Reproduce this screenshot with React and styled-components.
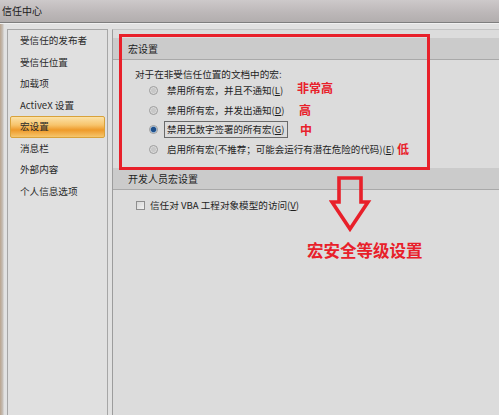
import React from 'react';
import styled, { createGlobalStyle } from 'styled-components';

const GlobalStyle = createGlobalStyle`
  html, body {
    margin: 0;
    padding: 0;
    overflow: hidden;
    background: #dcdcdc;
  }
  body {
    font-family: "Noto Sans CJK SC", "Liberation Sans", sans-serif;
    color: #1e1e1e;
  }
`;

const navItems = [
  '受信任的发布者',
  '受信任位置',
  '加载项',
  'ActiveX 设置',
  '宏设置',
  '消息栏',
  '外部内容',
  '个人信息选项',
];

const macroOptions = [
  { text: '禁用所有宏，并且不通知', key: 'L' },
  { text: '禁用所有宏，并发出通知', key: 'D' },
  { text: '禁用无数字签署的所有宏', key: 'G', checked: true },
  { text: '启用所有宏(不推荐；可能会运行有潜在危险的代码)', key: 'E' },
];

const notes = [
  { text: '非常高', left: 297, top: 80 },
  { text: '高', left: 299, top: 102 },
  { text: '中', left: 300, top: 122 },
  { text: '低', left: 397, top: 141 },
];

function App() {
  return (
    <Window>
      <GlobalStyle />
      <TitleBar>信任中心</TitleBar>
      <Body>
        <Nav>
          {navItems.map((item) => (
            <NavItem key={item} active={item === '宏设置'}>
              {item}
            </NavItem>
          ))}
        </Nav>
        <Panel>
          <SectionHeader>宏设置</SectionHeader>
          <Section>
            <Intro>对于在非受信任位置的文档中的宏:</Intro>
            {macroOptions.map((opt) => (
              <RadioRow key={opt.key}>
                <Radio checked={opt.checked} />
                <RadioLabel focused={opt.checked}>
                  {opt.text}(<u>{opt.key}</u>)
                </RadioLabel>
              </RadioRow>
            ))}
          </Section>
          <SectionHeader>开发人员宏设置</SectionHeader>
          <CheckRow>
            <CheckBox />
            <span>
              信任对 VBA 工程对象模型的访问(<u>V</u>)
            </span>
          </CheckRow>
        </Panel>
      </Body>

      {/* red annotations drawn over the dialog */}
      <RedFrame />
      {notes.map((n) => (
        <Note key={n.text} style={{ left: n.left, top: n.top }}>
          {n.text}
        </Note>
      ))}
      <Arrow width="44" height="60" viewBox="0 0 44 60">
        <path
          d="M10 2 H32 V26 H39 L21 53 L3 26 H10 Z"
          fill="none"
          stroke="#e8202a"
          strokeWidth="3.6"
          strokeLinejoin="miter"
        />
      </Arrow>
      <Caption>宏安全等级设置</Caption>
    </Window>
  );
}

const Window = styled.div`
  position: relative;
  width: 499px;
  height: 415px;
  display: flex;
  flex-direction: column;
  overflow: hidden;
  background: #dcdcdc;
`;

const TitleBar = styled.div`
  height: 22px;
  flex-shrink: 0;
  padding-left: 2px;
  font-size: 10px;
  line-height: 22px;
  color: #1a1a1a;
  background: linear-gradient(180deg, #cdc9ca 0%, #bdb8b9 55%, #b2aeae 100%);
  border-bottom: 1px solid #7e7e7e;
`;

const Body = styled.div`
  flex: 1;
  display: flex;
  gap: 4px;
  padding: 5px 0 0 7px;
  background: linear-gradient(90deg, #b9a48e 0px, #c8c2bc 3px, #e1e1e1 4px);
  border-top: 1px solid #f0f0f0;
`;

const Nav = styled.div`
  width: 99px;
  flex-shrink: 0;
  display: flex;
  flex-direction: column;
  background: #e0e0e0;
  border: 1px solid #a6a6a6;
  border-bottom: none;
`;

const NavItem = styled.div`
  box-sizing: border-box;
  height: 21.5px;
  line-height: 19.5px;
  margin: 0 2px;
  padding-left: 9px;
  font-size: 9.6px;
  color: #2a2a2a;
  white-space: nowrap;
  border: 1px solid ${(p) => (p.active ? '#d9a23a' : 'transparent')};
  border-radius: 2px;
  background: ${(p) =>
    p.active
      ? 'linear-gradient(180deg, #fbe2a8 0%, #f7c46c 40%, #ee9a2a 65%, #f6c66c 100%)'
      : 'transparent'};
`;

const Panel = styled.div`
  flex: 1;
  display: flex;
  flex-direction: column;
  padding-top: 8px;
  background: #dcdcdc;
  border-left: 1px solid #9c9c9c;
  border-top: 1px solid #c4c4c4;
`;

const SectionHeader = styled.div`
  height: 21px;
  line-height: 21px;
  padding-left: 15px;
  font-size: 10px;
  color: #1e1e1e;
  background: #cbcbcb;
  border-bottom: 1px solid #a9a9a9;
`;

const Section = styled.div`
  display: flex;
  flex-direction: column;
  padding: 7px 0 9px 22px;
`;

const Intro = styled.div`
  font-size: 9.6px;
  height: 14px;
  line-height: 14px;
`;

const RadioRow = styled.div`
  display: flex;
  align-items: center;
  gap: 6px;
  height: 19.5px;
  padding-left: 14px;
  font-size: 9.5px;
`;

const Radio = styled.span`
  width: 9px;
  height: 9px;
  box-sizing: border-box;
  border-radius: 50%;
  border: 1px solid #9a9a9a;
  background: ${(p) =>
    p.checked
      ? 'radial-gradient(circle, #1f4f8a 0 2.2px, #6f9ccc 2.8px, #e6e6e6 3.6px)'
      : 'radial-gradient(circle, #c8c8c8 0 2px, #ececec 4px)'};
`;

const RadioLabel = styled.span`
  padding: 1px 2px;
  line-height: 13px;
  border: 1px solid ${(p) => (p.focused ? '#6a6a6a' : 'transparent')};
  u {
    text-decoration: underline;
  }
`;

const CheckRow = styled.div`
  display: flex;
  align-items: center;
  gap: 5px;
  padding: 8px 0 0 23px;
  font-size: 9.6px;
`;

const CheckBox = styled.span`
  width: 9px;
  height: 9px;
  box-sizing: border-box;
  border: 1px solid #8e8e8e;
  background: linear-gradient(135deg, #d6d6d6, #f2f2f2);
`;

const RedFrame = styled.div`
  position: absolute;
  left: 119px;
  top: 34px;
  width: 311px;
  height: 136px;
  box-sizing: border-box;
  border: 3.5px solid #e8202a;
  pointer-events: none;
`;

const Note = styled.span`
  position: absolute;
  font-size: 12px;
  font-weight: 700;
  line-height: 16px;
  color: #e8202a;
`;

const Arrow = styled.svg`
  position: absolute;
  left: 329px;
  top: 176px;
`;

const Caption = styled.div`
  position: absolute;
  left: 307px;
  top: 239px;
  font-size: 16.5px;
  font-weight: 700;
  line-height: 22px;
  color: #e8202a;
  white-space: nowrap;
`;

export default App;
